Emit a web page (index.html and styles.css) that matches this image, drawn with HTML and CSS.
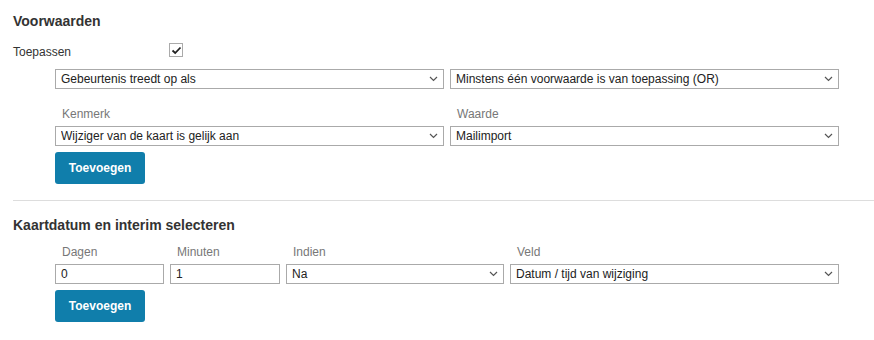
FILE: index.html
```html
<!DOCTYPE html>
<html lang="nl">

<head>
    <meta charset="UTF-8">
    <title>Voorwaarden</title>
    <link rel="stylesheet" href="styles.css">
</head>

<body>
    <div class="panel">
        <h2 class="panel-title">Voorwaarden</h2>

        <div class="apply-row">
            <span class="apply-label">Toepassen</span>
            <span class="check">
                <svg width="11" height="11" viewBox="0 0 11 11">
                    <polyline points="1.5,5.5 4.2,8 9.5,2.5" fill="none" stroke="#222" stroke-width="1.8" />
                </svg>
            </span>
        </div>

        <div class="fields fields-two">
            <div class="select-wrap">
                <select class="field">
                    <option>Gebeurtenis treedt op als</option>
                </select>
                <svg class="chevron" width="9" height="6" viewBox="0 0 9 6"><polyline points="1,1 4.5,4.5 8,1" /></svg>
            </div>
            <div class="select-wrap">
                <select class="field">
                    <option>Minstens één voorwaarde is van toepassing (OR)</option>
                </select>
                <svg class="chevron" width="9" height="6" viewBox="0 0 9 6"><polyline points="1,1 4.5,4.5 8,1" /></svg>
            </div>
        </div>

        <div class="fields fields-two labelled">
            <div class="col">
                <label class="field-label">Kenmerk</label>
                <div class="select-wrap">
                    <select class="field">
                        <option>Wijziger van de kaart is gelijk aan</option>
                    </select>
                    <svg class="chevron" width="9" height="6" viewBox="0 0 9 6"><polyline points="1,1 4.5,4.5 8,1" /></svg>
                </div>
            </div>
            <div class="col">
                <label class="field-label">Waarde</label>
                <div class="select-wrap">
                    <select class="field">
                        <option>Mailimport</option>
                    </select>
                    <svg class="chevron" width="9" height="6" viewBox="0 0 9 6"><polyline points="1,1 4.5,4.5 8,1" /></svg>
                </div>
            </div>
        </div>

        <div class="fields actions">
            <button class="btn">Toevoegen</button>
        </div>

        <hr class="divider">

        <h2 class="panel-title second">Kaartdatum en interim selecteren</h2>

        <div class="fields fields-four labelled">
            <div class="col">
                <label class="field-label">Dagen</label>
                <input class="field" type="text" value="0">
            </div>
            <div class="col">
                <label class="field-label">Minuten</label>
                <input class="field" type="text" value="1">
            </div>
            <div class="col">
                <label class="field-label">Indien</label>
                <div class="select-wrap">
                    <select class="field">
                        <option>Na</option>
                    </select>
                    <svg class="chevron" width="9" height="6" viewBox="0 0 9 6"><polyline points="1,1 4.5,4.5 8,1" /></svg>
                </div>
            </div>
            <div class="col">
                <label class="field-label">Veld</label>
                <div class="select-wrap">
                    <select class="field">
                        <option>Datum / tijd van wijziging</option>
                    </select>
                    <svg class="chevron" width="9" height="6" viewBox="0 0 9 6"><polyline points="1,1 4.5,4.5 8,1" /></svg>
                </div>
            </div>
        </div>

        <div class="fields actions">
            <button class="btn">Toevoegen</button>
        </div>
    </div>
</body>

</html>
```

FILE: styles.css
```css
body {
    margin: 0;
    background: #fff;
    font-family: "Liberation Sans", Arial, sans-serif;
    font-size: 12px;
    color: #333;
}

.panel {
    padding: 13px 0 0 13px;
}

.panel-title {
    margin: 0;
    font-size: 14px;
    line-height: 16px;
    font-weight: bold;
    color: #333;
}

.panel-title.second {
    margin-top: 16px;
}

.apply-row {
    display: flex;
    align-items: flex-start;
    margin-top: 14px;
}

.apply-label {
    width: 156px;
    padding-top: 2px;
    line-height: 14px;
}

.check {
    display: flex;
    align-items: center;
    justify-content: center;
    width: 12px;
    height: 12px;
    border: 1px solid #aaa;
    background: #fff;
}

.fields {
    margin: 10px 35px 0 42px;
}

.fields-two {
    display: grid;
    grid-template-columns: 1fr 1fr;
    gap: 6px;
}

.fields-four {
    display: grid;
    grid-template-columns: 109px 110px 218px 329px;
    gap: 6px;
}

.labelled {
    margin-top: 18px;
}

.fields-four.labelled {
    margin-top: 12px;
}

.fields.actions {
    margin-top: 6px;
}

.col {
    display: flex;
    flex-direction: column;
}

.field-label {
    padding-left: 7px;
    margin-bottom: 5px;
    line-height: 14px;
    color: #777;
}

.select-wrap {
    position: relative;
}

.chevron {
    position: absolute;
    top: 7px;
    right: 6px;
    pointer-events: none;
}

.chevron polyline {
    fill: none;
    stroke: #555;
    stroke-width: 1.2;
}

.field {
    display: block;
    box-sizing: border-box;
    width: 100%;
    height: 20px;
    margin: 0;
    padding: 0 0 0 5px;
    border: 1px solid #aaa;
    border-radius: 0;
    background: #fff;
    font-family: "Liberation Sans", Arial, sans-serif;
    font-size: 12px;
    color: #222;
    outline: none;
}

select.field {
    appearance: none;
    -webkit-appearance: none;
}

.btn {
    display: block;
    width: 90px;
    height: 32px;
    padding: 0;
    border: none;
    border-radius: 3px;
    background: #107eab;
    color: #fff;
    font-family: "Liberation Sans", Arial, sans-serif;
    font-size: 12px;
    font-weight: bold;
}

.divider {
    margin: 16px 0 0;
    border: none;
    border-top: 1px solid #ddd;
}
```
